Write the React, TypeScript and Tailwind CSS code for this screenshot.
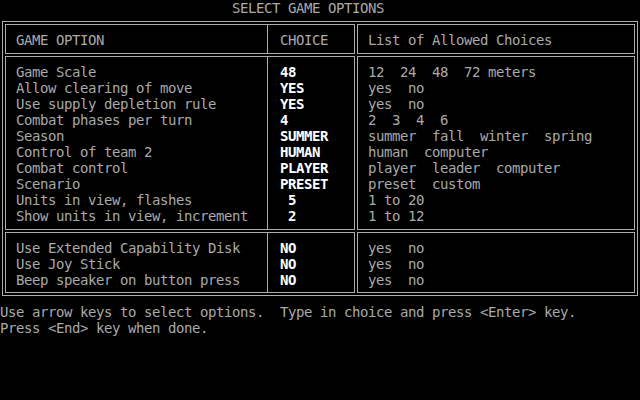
const options = [
  { label: 'Game Scale', value: '48', allowed: '12  24  48  72 meters' },
  { label: 'Allow clearing of move', value: 'YES', allowed: 'yes  no' },
  { label: 'Use supply depletion rule', value: 'YES', allowed: 'yes  no' },
  { label: 'Combat phases per turn', value: '4', allowed: '2  3  4  6' },
  { label: 'Season', value: 'SUMMER', allowed: 'summer  fall  winter  spring' },
  { label: 'Control of team 2', value: 'HUMAN', allowed: 'human  computer' },
  { label: 'Combat control', value: 'PLAYER', allowed: 'player  leader  computer' },
  { label: 'Scenario', value: 'PRESET', allowed: 'preset  custom' },
  { label: 'Units in view, flashes', value: ' 5', allowed: '1 to 20' },
  { label: 'Show units in view, increment', value: ' 2', allowed: '1 to 12' },
];

const extras = [
  { label: 'Use Extended Capability Disk', value: 'NO', allowed: 'yes  no' },
  { label: 'Use Joy Stick', value: 'NO', allowed: 'yes  no' },
  { label: 'Beep speaker on button press', value: 'NO', allowed: 'yes  no' },
];

type Row = { label: string; value: string; allowed: string };

function Section({ rows, height, header }: { rows: Row[]; height: string; header?: boolean }) {
  const valueClass = header ? 'text-[#aaaaaa]' : 'text-white font-bold';
  return (
    <div className={`flex gap-[2px] ${height}`}>
      <div className="flex w-[350px] border border-[#acacac]">
        <div className="w-[262px] border-r border-[#acacac] pl-[10px] pt-[7px]">
          {rows.map((r) => (
            <div key={r.label} className="h-4">{r.label}</div>
          ))}
        </div>
        <div className="flex-1 pl-[12px] pt-[7px]">
          {rows.map((r) => (
            <div key={r.label} className={`h-4 ${valueClass}`}>{r.value}</div>
          ))}
        </div>
      </div>
      <div className="flex-1 border border-[#acacac] pl-[10px] pt-[7px]">
        {rows.map((r) => (
          <div key={r.label} className="h-4">{r.allowed}</div>
        ))}
      </div>
    </div>
  );
}

export default function App() {
  return (
    <div className="min-h-screen w-[640px] h-[400px] bg-black text-[#aaaaaa] font-['DejaVu_Sans_Mono',monospace] text-[14px] tracking-[-0.43px] leading-4 whitespace-pre overflow-hidden">
      <div className="h-4 pl-[232px]">SELECT GAME OPTIONS</div>

      <div className="mt-[5px] ml-[2px] w-[636px] border border-[#acacac] p-[2px] flex flex-col gap-[2px]">
        <Section
          header
          height="h-[30px]"
          rows={[{ label: 'GAME OPTION', value: 'CHOICE', allowed: 'List of Allowed Choices' }]}
        />
        <Section height="h-[174px]" rows={options} />
        <Section height="h-[61px]" rows={extras} />
      </div>

      {/* Footer prompt */}
      <div className="mt-2">
        <div className="h-4">Use arrow keys to select options.  Type in choice and press &lt;Enter&gt; key.</div>
        <div className="h-4">Press &lt;End&gt; key when done.</div>
      </div>
    </div>
  );
}
